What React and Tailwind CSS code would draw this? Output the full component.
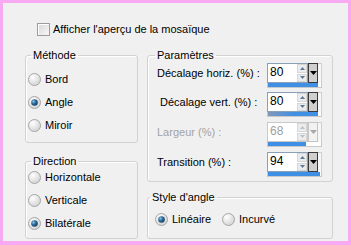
import React from 'react';

// Radio drawn as a small XP-style bubble
function Radio({ checked }) {
  return (
    <svg width="13" height="13" viewBox="0 0 13 13" className="shrink-0">
      <defs>
        <radialGradient id="rbg" cx="0.35" cy="0.3" r="0.8">
          <stop offset="0" stopColor="#ffffff" />
          <stop offset="1" stopColor="#cfcfcf" />
        </radialGradient>
        <radialGradient id="rdot" cx="0.35" cy="0.35" r="0.7">
          <stop offset="0" stopColor="#8fc1e3" />
          <stop offset="0.5" stopColor="#2a6a98" />
          <stop offset="1" stopColor="#163f60" />
        </radialGradient>
      </defs>
      <circle cx="6.5" cy="6.5" r="6" fill="url(#rbg)" stroke="#a6a6a6" />
      {checked && <circle cx="6.5" cy="6.5" r="3.3" fill="url(#rdot)" />}
    </svg>
  );
}

const RadioRow = ({ label, checked }) => (
  <div className="flex items-center h-[13px]">
    <Radio checked={checked} />
    <span className="ml-[4px]">{label}</span>
  </div>
);

function Spin({ value, barClass, disabled }) {
  const arrow = disabled ? '#b8c4d0' : '#5a7a9c';
  return (
    <div className="w-[55px] h-[25px] flex flex-col">
      <div className="flex h-[20px]">
        <div
          className={
            disabled
              ? 'w-[41px] flex border border-[#c9c9c9] bg-white text-[#a0a0a0]'
              : 'w-[41px] flex border border-[#8aa0b8] bg-white text-black'
          }
        >
          <span className="flex-1 pl-[2px] pt-[1px] text-[12px] leading-[14px]">{value}</span>
          <div className="w-[10px] flex flex-col gap-[1px] py-[0px]">
            <div className="flex-1 flex items-center justify-center bg-[#ececec] border border-[#d6d6d6]">
              <svg width="5" height="3" viewBox="0 0 5 3"><path d="M2.5 0L5 3H0z" fill={arrow} /></svg>
            </div>
            <div className="flex-1 flex items-center justify-center bg-[#ececec] border border-[#d6d6d6]">
              <svg width="5" height="3" viewBox="0 0 5 3"><path d="M0 0H5L2.5 3z" fill={arrow} /></svg>
            </div>
          </div>
        </div>
        <div
          className={
            disabled
              ? 'w-[10px] flex items-center justify-center border border-[#c4c4c4] bg-[#f2f2f2]'
              : 'w-[10px] flex items-center justify-center border border-[#3a3a3a] bg-[#cfcfcf]'
          }
        >
          <svg width="7" height="4" viewBox="0 0 7 4">
            <path d="M0 0H7L3.5 4z" fill={disabled ? '#a8a8a8' : '#000000'} />
          </svg>
        </div>
        <div className="flex-1 border-t border-r border-[#d0d0d0] bg-[#f6f6f6]" />
      </div>
      <div className="flex h-[5px] border border-t-0 border-[#c8c8c8] bg-white">
        <div className={barClass} />
      </div>
    </div>
  );
}

const SpinRow = ({ label, pl, mt, children, disabled }) => (
  <div className={`flex h-[25px] pr-[10px] ${mt}`}>
    <span className={`flex-1 pt-[4px] ${pl} ${disabled ? 'text-[#a3a3a3]' : ''}`}>{label}</span>
    {children}
  </div>
);

export default function App() {
  return (
    <div className="w-[351px] h-[245px] border-[3px] border-b-4 border-[#f7a9f2] bg-[#f0f0f0] text-black text-[11px] leading-[13px] font-['Liberation_Sans',Arial,sans-serif]">
      {/* Preview checkbox */}
      <div className="flex items-center pl-[34px] pt-[20px] h-[33px]">
        <span className="w-[13px] h-[13px] border border-[#9c9c9c] bg-gradient-to-br from-[#d8d8d8] to-[#f7f7f7] shadow-[inset_1px_1px_0_#ffffff]" />
        <span className="ml-[3px]">Afficher l'aperçu de la mosaïque</span>
      </div>

      <div className="flex pl-[22px] gap-[9px] mt-[13px]">
        {/* Left column */}
        <div className="w-[113px] flex flex-col">
          <fieldset className="border border-[#d2d2d2] rounded-[3px] pb-[10px] shadow-[inset_1px_1px_0_#ffffff]">
            <legend className="ml-[5px] px-[2px]">Méthode</legend>
            <div className="flex flex-col gap-[10px] pt-[11px] pl-[2px]">
              <RadioRow label="Bord" />
              <RadioRow label="Angle" checked />
              <RadioRow label="Miroir" />
            </div>
          </fieldset>
          <fieldset className="mt-[12px] border border-[#d2d2d2] rounded-[3px] pb-[8px] shadow-[inset_1px_1px_0_#ffffff]">
            <legend className="ml-[5px] px-[2px]">Direction</legend>
            <div className="flex flex-col gap-[10px] pt-[3px] pl-[2px]">
              <RadioRow label="Horizontale" />
              <RadioRow label="Verticale" />
              <RadioRow label="Bilatérale" checked />
            </div>
          </fieldset>
        </div>

        {/* Right column */}
        <div className="w-[186px] flex flex-col">
          <fieldset className="border border-[#d2d2d2] rounded-[3px] pt-[1px] pb-[4px] shadow-[inset_1px_1px_0_#ffffff]">
            <legend className="ml-[7px] px-[2px]">Paramètres</legend>
            <SpinRow label="Décalage horiz. (%) :" pl="pl-[9px]" mt="">
              <Spin value="80" barClass="w-[50px] bg-[#3f8fe4]" />
            </SpinRow>
            <SpinRow label="Décalage vert. (%) :" pl="pl-[12px]" mt="mt-[4px]">
              <Spin value="80" barClass="w-[50px] bg-gradient-to-r from-[#7f98b8] via-[#3f8fe4] to-[#3f8fe4]" />
            </SpinRow>
            <SpinRow label="Largeur (%) :" pl="pl-[9px]" mt="mt-[5px]" disabled>
              <Spin value="68" barClass="w-[38px] bg-[#3f8fe4]" disabled />
            </SpinRow>
            <SpinRow label="Transition (%) :" pl="pl-[9px]" mt="mt-[5px]">
              <Spin value="94" barClass="w-[52px] bg-[#3f8fe4]" />
            </SpinRow>
          </fieldset>
          <fieldset className="mt-[9px] border border-[#d2d2d2] rounded-[3px] pb-[12px] shadow-[inset_1px_1px_0_#ffffff]">
            <legend className="ml-[2px] px-[2px]">Style d'angle</legend>
            <div className="flex pt-[9px] pl-[7px]">
              <div className="w-[67px]">
                <RadioRow label="Linéaire" checked />
              </div>
              <RadioRow label="Incurvé" />
            </div>
          </fieldset>
        </div>
      </div>
    </div>
  );
}
